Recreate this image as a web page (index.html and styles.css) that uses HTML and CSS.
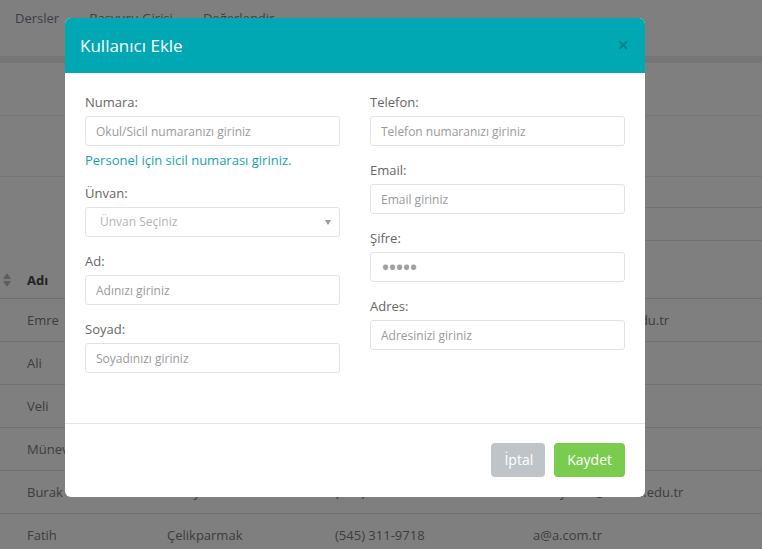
FILE: index.html
```html
<!DOCTYPE html>
<html lang="tr">
<head>
<meta charset="utf-8">
<title>Kullanıcı Ekle</title>
<link rel="stylesheet" href="styles.css">
</head>
<body>
<div class="page">
  <nav class="nav">
    <a class="nav-item nav-1">Dersler</a>
    <a class="nav-item nav-2">Başvuru Girişi</a>
    <a class="nav-item nav-3">Değerlendir</a>
  </nav>
  <div class="nav-shadow"></div>
  <div class="crumb"></div>
  <div class="titlebar"></div>
  <div class="toolbar"><div class="search"></div></div>
  <div class="table">
    <div class="row head">
      <div class="cell"><span class="sort"></span>Adı</div>
      <div class="cell"><span class="sort"></span>Soyadı</div>
      <div class="cell"><span class="sort"></span>Telefon</div>
      <div class="cell"><span class="sort"></span>Email</div>
    </div>
    <div class="row"><div class="cell">Emre</div><div class="cell">Kaya</div><div class="cell">(505) 123-4567</div><div class="cell">emrek1@atauni.edu.tr</div></div>
    <div class="row"><div class="cell">Ali</div><div class="cell">Yılmaz</div><div class="cell">(532) 222-3344</div><div class="cell">ali@a.com.tr</div></div>
    <div class="row"><div class="cell">Veli</div><div class="cell">Demir</div><div class="cell">(533) 444-5566</div><div class="cell">veli@a.com.tr</div></div>
    <div class="row"><div class="cell">Münevver</div><div class="cell">Şahin</div><div class="cell">(542) 777-8899</div><div class="cell">m@a.com.tr</div></div>
    <div class="row"><div class="cell">Burak</div><div class="cell">Erkayman</div><div class="cell">(555) 555-5555</div><div class="cell">erkayman@atauni.edu.tr</div></div>
    <div class="row"><div class="cell">Fatih</div><div class="cell">Çelikparmak</div><div class="cell">(545) 311-9718</div><div class="cell">a@a.com.tr</div></div>
  </div>
</div>

<div class="overlay"></div>

<div class="modal">
  <div class="modal-header">
    <h4 class="modal-title">Kullanıcı Ekle</h4>
    <span class="close">×</span>
  </div>
  <div class="modal-body">
    <div class="col">
      <div class="group">
        <label class="label">Numara:</label>
        <input class="input" type="text" placeholder="Okul/Sicil numaranızı giriniz">
        <div class="help">Personel için sicil numarası giriniz.</div>
      </div>
      <div class="group">
        <label class="label">Ünvan:</label>
        <div class="select-wrap"><div class="select">Ünvan Seçiniz</div></div>
      </div>
      <div class="group">
        <label class="label">Ad:</label>
        <input class="input" type="text" placeholder="Adınızı giriniz">
      </div>
      <div class="group">
        <label class="label">Soyad:</label>
        <input class="input" type="text" placeholder="Soyadınızı giriniz">
      </div>
    </div>
    <div class="col">
      <div class="group">
        <label class="label">Telefon:</label>
        <input class="input" type="text" placeholder="Telefon numaranızı giriniz">
      </div>
      <div class="group">
        <label class="label">Email:</label>
        <input class="input" type="text" placeholder="Email giriniz">
      </div>
      <div class="group">
        <label class="label">Şifre:</label>
        <input class="input password" type="password" value="12345">
      </div>
      <div class="group">
        <label class="label">Adres:</label>
        <input class="input" type="text" placeholder="Adresinizi giriniz">
      </div>
    </div>
  </div>
  <div class="modal-footer">
    <button class="btn btn-cancel">İptal</button>
    <button class="btn btn-save">Kaydet</button>
  </div>
</div>
</body>
</html>
```

FILE: styles.css
```css
* { box-sizing: border-box; }
html, body { margin: 0; padding: 0; }
body {
  font-family: "Open Sans", "Liberation Sans", sans-serif;
  font-size: 13px;
  color: #555;
  background: #fff;
  width: 762px;
  height: 549px;
  overflow: hidden;
}

/* underlying page */
.page { width: 762px; }
.nav {
  height: 56px;
  display: flex;
  align-items: flex-start;
  padding: 9px 0 0 15px;
  background: #fff;
}
.nav-item { line-height: 18px; color: #7a7a90; }
.nav-2 { margin-left: 30px; }
.nav-3 { margin-left: 30px; }
.nav-shadow { height: 7px; background: #ededed; }
.crumb { height: 53px; border-bottom: 1px solid #ececec; }
.titlebar { height: 61px; border-bottom: 1px solid #ececec; }
.toolbar {
  height: 84px;
  padding-top: 30px;
  display: flex;
  justify-content: flex-end;
}
.search {
  width: 220px;
  height: 34px;
  border: 1px solid #e0e0e0;
  border-right: none;
}
.row {
  display: grid;
  grid-template-columns: 140px 168px 198px 1fr;
  height: 43px;
  align-items: center;
  border-bottom: 1px solid #e2e2e2;
  color: #7a7a7a;
}
.row.head {
  height: 38px;
  font-weight: 700;
  color: #444;
  border-bottom: 1px solid #dcdcdc;
}
.cell { padding-left: 27px; position: relative; white-space: nowrap; }
.sort {
  position: absolute;
  left: 3px;
  top: 50%;
  width: 8px;
  height: 14px;
  margin-top: -7px;
}
.sort::before, .sort::after {
  content: "";
  position: absolute;
  left: 0;
  border-left: 4px solid transparent;
  border-right: 4px solid transparent;
}
.sort::before { top: 0; border-bottom: 6px solid #bbb; }
.sort::after { bottom: 0; border-top: 6px solid #bbb; }

/* overlay + modal */
.overlay {
  position: fixed;
  inset: 0;
  background: rgba(0, 0, 0, 0.5);
}
.modal {
  position: fixed;
  left: 65px;
  top: 18px;
  width: 580px;
  background: #fff;
  border-radius: 6px;
  overflow: hidden;
}
.modal-header {
  height: 55px;
  background: #00a8b3;
  display: flex;
  align-items: center;
  justify-content: space-between;
  padding: 0 16px 0 15px;
}
.modal-title {
  margin: 0;
  font-size: 17px;
  font-weight: 400;
  color: #fff;
  line-height: 20px;
}
.close {
  font-size: 20px;
  font-weight: 700;
  line-height: 20px;
  color: #000;
  opacity: 0.2;
  margin-top: -2px;
}
.modal-body {
  display: grid;
  grid-template-columns: 255px 255px;
  column-gap: 30px;
  padding: 20px 20px 35px;
}
.group { margin-bottom: 15px; }
.label {
  display: block;
  line-height: 18px;
  margin-bottom: 5px;
  color: #666;
}
.input, .select {
  display: block;
  width: 100%;
  height: 30px;
  border: 1px solid #e3e3e3;
  border-radius: 3px;
  padding: 0 10px;
  font-family: "Open Sans", "Liberation Sans", sans-serif;
  font-size: 12px;
  color: #999;
  background: #fff;
  outline: none;
}
.input::placeholder { color: #9a9a9a; opacity: 1; }
.password { font-size: 24px; letter-spacing: -2px; color: #a0a0a0; padding-bottom: 1px; }
.help {
  margin-top: 5px;
  line-height: 18px;
  color: #17a3ad;
}
.select-wrap { position: relative; }
.select {
  line-height: 28px;
  padding-left: 14px;
  color: #b5b5b5;
}
.select-wrap::after {
  content: "";
  position: absolute;
  right: 9px;
  top: 13px;
  border-left: 3px solid transparent;
  border-right: 3px solid transparent;
  border-top: 5px solid #999;
}
.modal-footer {
  border-top: 1px solid #e5e5e5;
  padding: 19px 20px 20px;
  display: flex;
  justify-content: flex-end;
  gap: 9px;
}
.btn {
  height: 34px;
  padding: 0 13px;
  border: none;
  border-radius: 4px;
  font-family: "Open Sans", "Liberation Sans", sans-serif;
  font-size: 14px;
  color: #fff;
  line-height: 34px;
}
.btn-cancel { background: #bfc4c8; padding: 0 12px 0 13px; }
.btn-save { background: #7acc4f; }
```
